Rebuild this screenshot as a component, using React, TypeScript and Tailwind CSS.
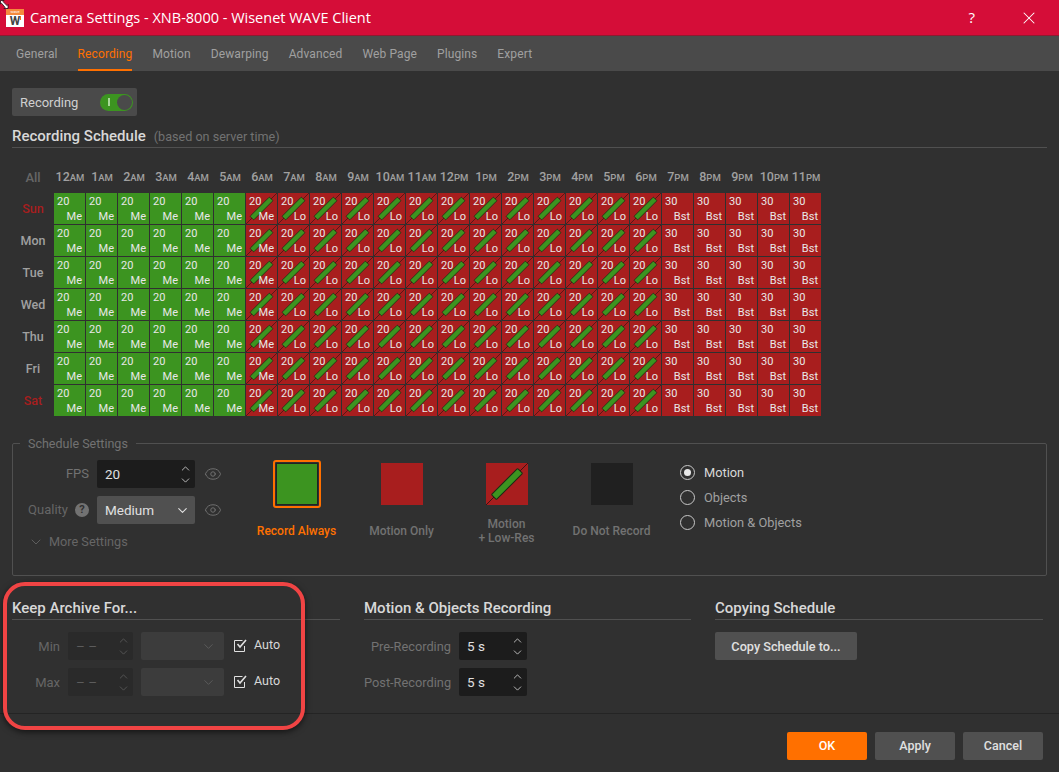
import React from 'react';
import { ChevronDown, ChevronUp, Eye, X } from 'lucide-react';

const hours = ['12', '1', '2', '3', '4', '5', '6', '7', '8', '9', '10', '11'];
const headers = [
  ...hours.map((h) => ({ h, s: 'AM' })),
  ...hours.map((h) => ({ h, s: 'PM' })),
];
const days = ['Sun', 'Mon', 'Tue', 'Wed', 'Thu', 'Fri', 'Sat'];
const tabs = ['General', 'Recording', 'Motion', 'Dewarping', 'Advanced', 'Web Page', 'Plugins', 'Expert'];

const LowRes = () => (
  <svg viewBox="0 0 42 42" className="absolute inset-0 w-full h-full">
    <line x1="0" y1="42" x2="42" y2="0" stroke="#3a1414" strokeWidth="1" />
    <rect x="2.5" y="17.5" width="37" height="7" rx="1" fill="#3c9420" stroke="#1c2a14" strokeWidth="1" transform="rotate(-45 21 21)" />
  </svg>
);

const Cell = ({ hour }: { hour: number }) => {
  const green = hour < 6;
  const burst = hour >= 19;
  const diag = !green && !burst;
  const label = green || hour === 6 ? 'Me' : burst ? 'Bst' : 'Lo';
  return (
    <div className={`relative w-[31px] h-[31px] ${green ? 'bg-[#3c9420]' : 'bg-[#a81e1e]'} text-[#e8e8e8] text-[11px] leading-none`}>
      {diag && <LowRes />}
      <span className="absolute left-[3px] top-[3px]">{burst ? 30 : 20}</span>
      <span className="absolute right-[3px] bottom-[2px]">{label}</span>
    </div>
  );
};

const Spinner = ({ value, width, disabled }: { value: string; width: string; disabled?: boolean }) => (
  <div className={`${width} h-[28px] rounded-[2px] flex items-center justify-between pl-2 pr-[3px] ${disabled ? 'bg-[#2a2a2a] text-[#5c5c5c]' : 'bg-[#1c1c1c] text-[#e0e0e0]'} text-[13.5px]`}>
    <span className="pt-[1px]">{value}</span>
    <div className={`flex flex-col ${disabled ? 'text-[#5c5c5c]' : 'text-[#d8d8d8]'}`}>
      <ChevronUp size={13} strokeWidth={1.5} className="-mb-[1px]" />
      <ChevronDown size={13} strokeWidth={1.5} />
    </div>
  </div>
);

const Tile = ({ label, color, children, active }: { label: React.ReactNode; color: string; children?: React.ReactNode; active?: boolean }) => (
  <div className="w-[105px] flex flex-col items-center">
    <div className={`w-[48px] h-[48px] flex items-center justify-center rounded-[3px] ${active ? 'border-2 border-[#ff7000]' : ''}`}>
      <div className={`relative ${active ? 'w-[42px] h-[42px] border border-[#222]' : 'w-[42px] h-[42px]'} ${color}`}>{children}</div>
    </div>
    <div className={`h-[44px] pt-[2px] flex items-center text-center text-[12px] leading-[14px] font-medium ${active ? 'text-[#ff7000]' : 'text-[#727272]'}`}>
      <div>{label}</div>
    </div>
  </div>
);

const Radio = ({ label, checked }: { label: string; checked?: boolean }) => (
  <div className="h-[25px] flex items-center gap-[9px]">
    <div className="w-[15px] h-[15px] rounded-full border border-[#c8c8c8] flex items-center justify-center">
      {checked && <div className="w-[7px] h-[7px] rounded-full bg-[#e8e8e8]" />}
    </div>
    <span className={`text-[12.8px] ${checked ? 'text-[#d8d8d8]' : 'text-[#a0a0a0]'}`}>{label}</span>
  </div>
);

const SectionHead = ({ title }: { title: string }) => (
  <div className="h-[24px] border-b border-[#505050] text-[15px] font-medium text-[#d8d8d8] leading-[24px]">{title}</div>
);

const AutoCheck = () => (
  <div className="flex items-center gap-[7px] text-[12.5px] text-[#d8d8d8]">
    <svg width="13" height="13" viewBox="0 0 13 13" fill="none">
      <path d="M10.5 7v5.5H.5V1.5h8" stroke="#e0e0e0" strokeWidth="1" />
      <path d="M3.5 5L6 8L12 1" stroke="#e0e0e0" strokeWidth="1.6" />
    </svg>
    <span>Auto</span>
  </div>
);

const ArchiveRow = ({ label }: { label: string }) => (
  <div className="flex items-center h-[28px]">
    <span className="w-[48px] pt-[1px] text-right text-[13px] text-[#666]">{label}</span>
    <div className="w-[8px]" />
    <Spinner value="– –" width="w-[65px]" disabled />
    <div className="ml-[8px] w-[83px] h-[28px] rounded-[2px] bg-[#3c3c3c] flex items-center justify-end pr-[8px] text-[#5c5c5c]">
      <ChevronDown size={15} strokeWidth={1.5} />
    </div>
    <div className="ml-[10px] -mt-[1px]"><AutoCheck /></div>
  </div>
);

const PrePostRow = ({ label }: { label: string }) => (
  <div className="flex items-center h-[28px]">
    <span className="w-[87px] pt-[1px] text-right text-[12.8px] text-[#727272] whitespace-nowrap">{label}</span>
    <div className="w-[8px]" />
    <Spinner value="5 s" width="w-[68px]" />
  </div>
);

const FooterButton = ({ label, primary }: { label: string; primary?: boolean }) => (
  <div className={`w-[80px] h-[28px] pt-[1px] rounded-[2px] flex items-center justify-center text-[12.5px] font-medium ${primary ? 'bg-[#ff7000] text-white' : 'bg-[#505050] text-[#e0e0e0]'}`}>{label}</div>
);

export default function App() {
  return (
    <div className="relative w-[1059px] h-[772px] overflow-hidden bg-[#303030] flex flex-col font-['Roboto',sans-serif]">
      <div className="h-[36px] shrink-0 bg-[#d50d38] border-b border-[#8e1a30] flex items-center text-white">
        <div className="relative ml-[6px] w-[18px] h-[18px] bg-white shrink-0 mt-[1px]">
          <div className="h-[6px] bg-[#f58a3c] text-[4px] leading-[6px] text-center text-white">wave</div>
          <div className="text-[12px] font-bold leading-[12px] text-center text-[#444]">W</div>
          <div className="absolute right-[3px] top-[7px] w-[1.5px] h-[4px] bg-[#f5701c]" />
        </div>
        <span className="ml-[6px] text-[14.5px] font-['Open_Sans',sans-serif] whitespace-nowrap">Camera Settings - XNB-8000 - Wisenet WAVE Client</span>
        <span className="ml-auto text-[15px] font-['Open_Sans',sans-serif]">?</span>
        <X size={20} strokeWidth={1.25} className="ml-[44px] mr-[20px]" />
      </div>

      <div className="h-[35px] shrink-0 bg-[#4a4a4a] flex pl-[16px] gap-[20px] text-[12px] tracking-[0.11px] text-[#a0a0a0]">
        {tabs.map((t) => (
          <div key={t} className={`h-full pt-[2px] flex items-center border-b-2 ${t === 'Recording' ? 'border-[#ff7000] text-[#ff7000]' : 'border-transparent'}`}>{t}</div>
        ))}
      </div>

      <div className="flex-1 flex flex-col px-[12px] pt-[17px]">
        <div className="w-[125px] h-[28px] bg-[#4a4a4a] rounded-[2px] flex items-center justify-between pl-[8px] pr-[4px] text-[13px] text-[#d0d0d0]">
          <span className="pt-[1px]">Recording</span>
          <div className="w-[33px] h-[17px] rounded-full bg-[#3c9420] flex items-center justify-between pl-[8px] pr-[1px]">
            <div className="w-[1.5px] h-[8px] bg-[#a8d898]" />
            <div className="w-[15px] h-[15px] rounded-full bg-[#4a4a4a]" />
          </div>
        </div>

        <div className="mt-[11px] h-[21px] border-b border-[#505050] flex items-baseline gap-[8px]">
          <span className="text-[15px] font-medium text-[#d8d8d8] leading-[19px]">Recording Schedule</span>
          <span className="text-[12.6px] text-[#727272]">(based on server time)</span>
        </div>

        <div className="mt-[13px] grid grid-cols-[42px_repeat(24,32px)] grid-rows-[32px_repeat(7,32px)]">
          <div className="flex items-center justify-center pt-[1px] text-[13px] font-medium text-[#666]">All</div>
          {headers.map((c, i) => (
            <div key={i} className="flex items-baseline justify-center pt-[7px] text-[#a0a0a0] font-medium whitespace-nowrap">
              <span className="text-[12.5px]">{c.h}</span>
              <span className="text-[9.5px]">{c.s}</span>
            </div>
          ))}
          {days.map((d) => (
            <React.Fragment key={d}>
              <div className={`flex items-center justify-center text-[12.5px] font-medium pt-[1px] ${d === 'Sun' || d === 'Sat' ? 'text-[#a81e1e]' : 'text-[#a0a0a0]'}`}>{d}</div>
              {headers.map((_, i) => (
                <Cell key={i} hour={i} />
              ))}
            </React.Fragment>
          ))}
        </div>

        <div className="relative mt-[26px] h-[133px] border border-[#505050] rounded-[2px] flex">
          <div className="absolute left-[7px] -top-[8px] px-[8px] bg-[#303030] text-[12.5px] leading-[16px] text-[#727272]">Schedule Settings</div>
          <div className="w-[231px] shrink-0 pl-[15px] pt-[16px] flex flex-col">
            <div className="flex items-center h-[28px]">
              <span className="w-[61px] text-right text-[13px] text-[#727272]">FPS</span>
              <div className="w-[8px]" />
              <Spinner value="20" width="w-[98px]" />
              <Eye size={18} strokeWidth={1.25} className="ml-[9px] text-[#727272]" />
            </div>
            <div className="flex items-center h-[28px] mt-[8px]">
              <span className="w-[61px] flex items-center justify-end gap-[7px] text-[13px] text-[#666]">
                Quality
                <span className="w-[14px] h-[14px] rounded-full bg-[#727272] text-[#303030] text-[11px] font-bold leading-[14px] text-center">?</span>
              </span>
              <div className="w-[8px]" />
              <div className="w-[98px] h-[28px] rounded-[2px] bg-[#505050] flex items-center justify-between pl-[8px] pr-[5px] text-[13.5px] text-[#e0e0e0]">
                <span>Medium</span>
                <ChevronDown size={15} strokeWidth={1.75} />
              </div>
              <Eye size={18} strokeWidth={1.25} className="ml-[9px] text-[#727272]" />
            </div>
            <div className="mt-[8px] flex items-center gap-[5px] text-[12.7px] text-[#666]">
              <ChevronDown size={16} strokeWidth={1.25} />
              <span>More Settings</span>
            </div>
          </div>
          <div className="flex pt-[16px]">
            <Tile label="Record Always" color="bg-[#3c9420]" active />
            <Tile label="Motion Only" color="bg-[#a81e1e]" />
            <Tile label={<>Motion<br />+ Low-Res</>} color="bg-[#a81e1e]"><LowRes /></Tile>
            <Tile label="Do Not Record" color="bg-[#202020]" />
          </div>
          <div className="ml-[16px] pt-[16px] flex flex-col">
            <Radio label="Motion" checked />
            <Radio label="Objects" />
            <Radio label="Motion & Objects" />
          </div>
        </div>

        <div className="mt-[20px] flex gap-[24px]">
          <div className="w-[328px]">
            <SectionHead title="Keep Archive For..." />
            <div className="mt-[12px] flex flex-col gap-[8px]">
              <ArchiveRow label="Min" />
              <ArchiveRow label="Max" />
            </div>
          </div>
          <div className="w-[327px]">
            <SectionHead title="Motion & Objects Recording" />
            <div className="mt-[12px] flex flex-col gap-[8px]">
              <PrePostRow label="Pre-Recording" />
              <PrePostRow label="Post-Recording" />
            </div>
          </div>
          <div className="w-[328px]">
            <SectionHead title="Copying Schedule" />
            <div className="mt-[12px] w-[142px] h-[28px] pt-[1px] rounded-[2px] bg-[#505050] flex items-center justify-center text-[12.7px] font-medium text-[#e0e0e0]">Copy Schedule to...</div>
          </div>
        </div>
      </div>

      <div className="h-[59px] shrink-0 border-t border-[#242424] flex justify-end items-start pt-[18px] pr-[16px] gap-[8px]">
        <FooterButton label="OK" primary />
        <FooterButton label="Apply" />
        <FooterButton label="Cancel" />
      </div>

      {/* red annotation drawn over the screenshot */}
      <div className="absolute left-[3px] top-[582px] w-[302px] h-[148px] rounded-[22px] border-[4px] border-[#f04444] shadow-[0_2px_6px_rgba(0,0,0,0.6)]" />

      {/* mouse cursor caught in the capture */}
      <svg className="absolute left-0 top-0" width="9" height="9" viewBox="0 0 9 9">
        <path d="M0.5 0.5H4L3 1.6L7 5.6L8 4.5V8.5H4L5.1 7.4L1.5 3.2L0.5 4Z" fill="#fff" stroke="#000" strokeWidth="0.7" />
      </svg>
    </div>
  );
}
